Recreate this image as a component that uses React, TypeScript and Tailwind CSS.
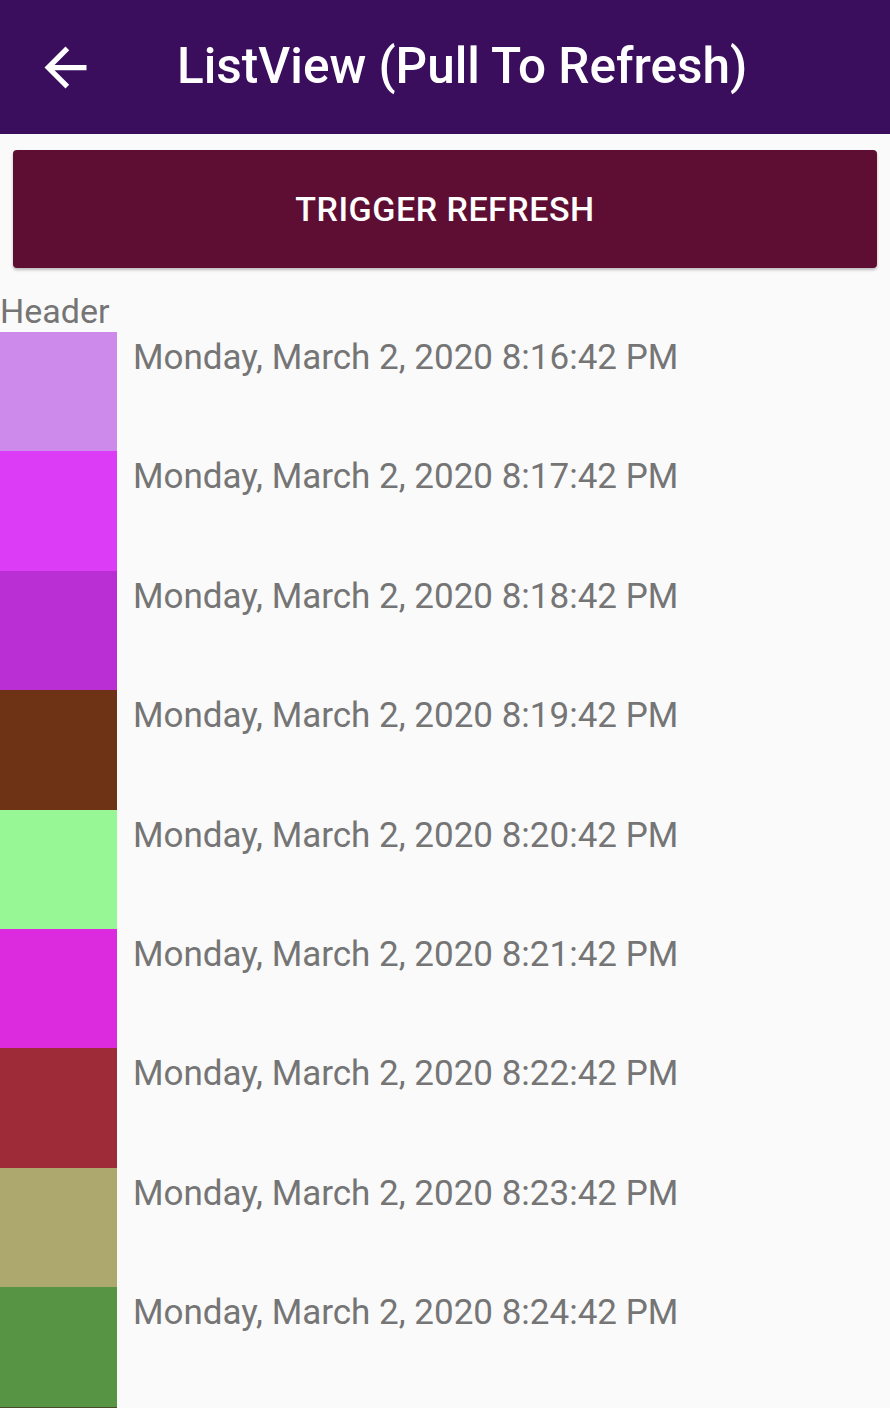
const ROWS = [
  { color: "#cd8aea", time: "8:16:42 PM" },
  { color: "#dc3cf6", time: "8:17:42 PM" },
  { color: "#b92fd3", time: "8:18:42 PM" },
  { color: "#6d3314", time: "8:19:42 PM" },
  { color: "#98f795", time: "8:20:42 PM" },
  { color: "#dc2ade", time: "8:21:42 PM" },
  { color: "#9e2c38", time: "8:22:42 PM" },
  { color: "#aca86e", time: "8:23:42 PM" },
  { color: "#579443", time: "8:24:42 PM" },
];

export default function App() {
  return (
    <div className="h-[1408px] w-[890px] overflow-hidden bg-[#fafafa] font-['Roboto',sans-serif]">
      <div className="flex h-[134px] items-center bg-[#3a0e5c] pl-[34px]">
        <svg viewBox="0 0 24 24" className="h-[63px] w-[63px] fill-white">
          <path d="M20 11H7.83l5.59-5.59L12 4l-8 8 8 8 1.41-1.41L7.83 13H20v-2z" />
        </svg>
        <h1 className="ml-[80px] text-[49.5px] font-medium leading-none text-white">
          ListView (Pull To Refresh)
        </h1>
      </div>
      <div className="px-[13px] pt-[16px]">
        <button className="flex h-[118px] w-full items-center justify-center rounded-[4px] bg-[#5e0e33] text-[34px] font-medium tracking-[0.5px] text-white shadow-[0_2px_3px_rgba(0,0,0,0.25)]">
          TRIGGER REFRESH
        </button>
      </div>
      <div className="mt-[23px] h-[41px] text-[34px] leading-[41px] text-[#757575]">Header</div>
      <div className="flex flex-col">
        {ROWS.map((row) => (
          <div key={row.time} className="flex h-[119.4px] shrink-0">
            <div className="w-[117px] shrink-0" style={{ backgroundColor: row.color }} />
            <div className="pl-[16px] pt-[4px] text-[35px] leading-[44px] text-[#757575]">
              Monday, March 2, 2020 {row.time}
            </div>
          </div>
        ))}
        <div className="flex h-[119.4px] shrink-0">
          <div className="w-[117px] shrink-0 bg-[#4b4a2c]" />
        </div>
      </div>
    </div>
  );
}
